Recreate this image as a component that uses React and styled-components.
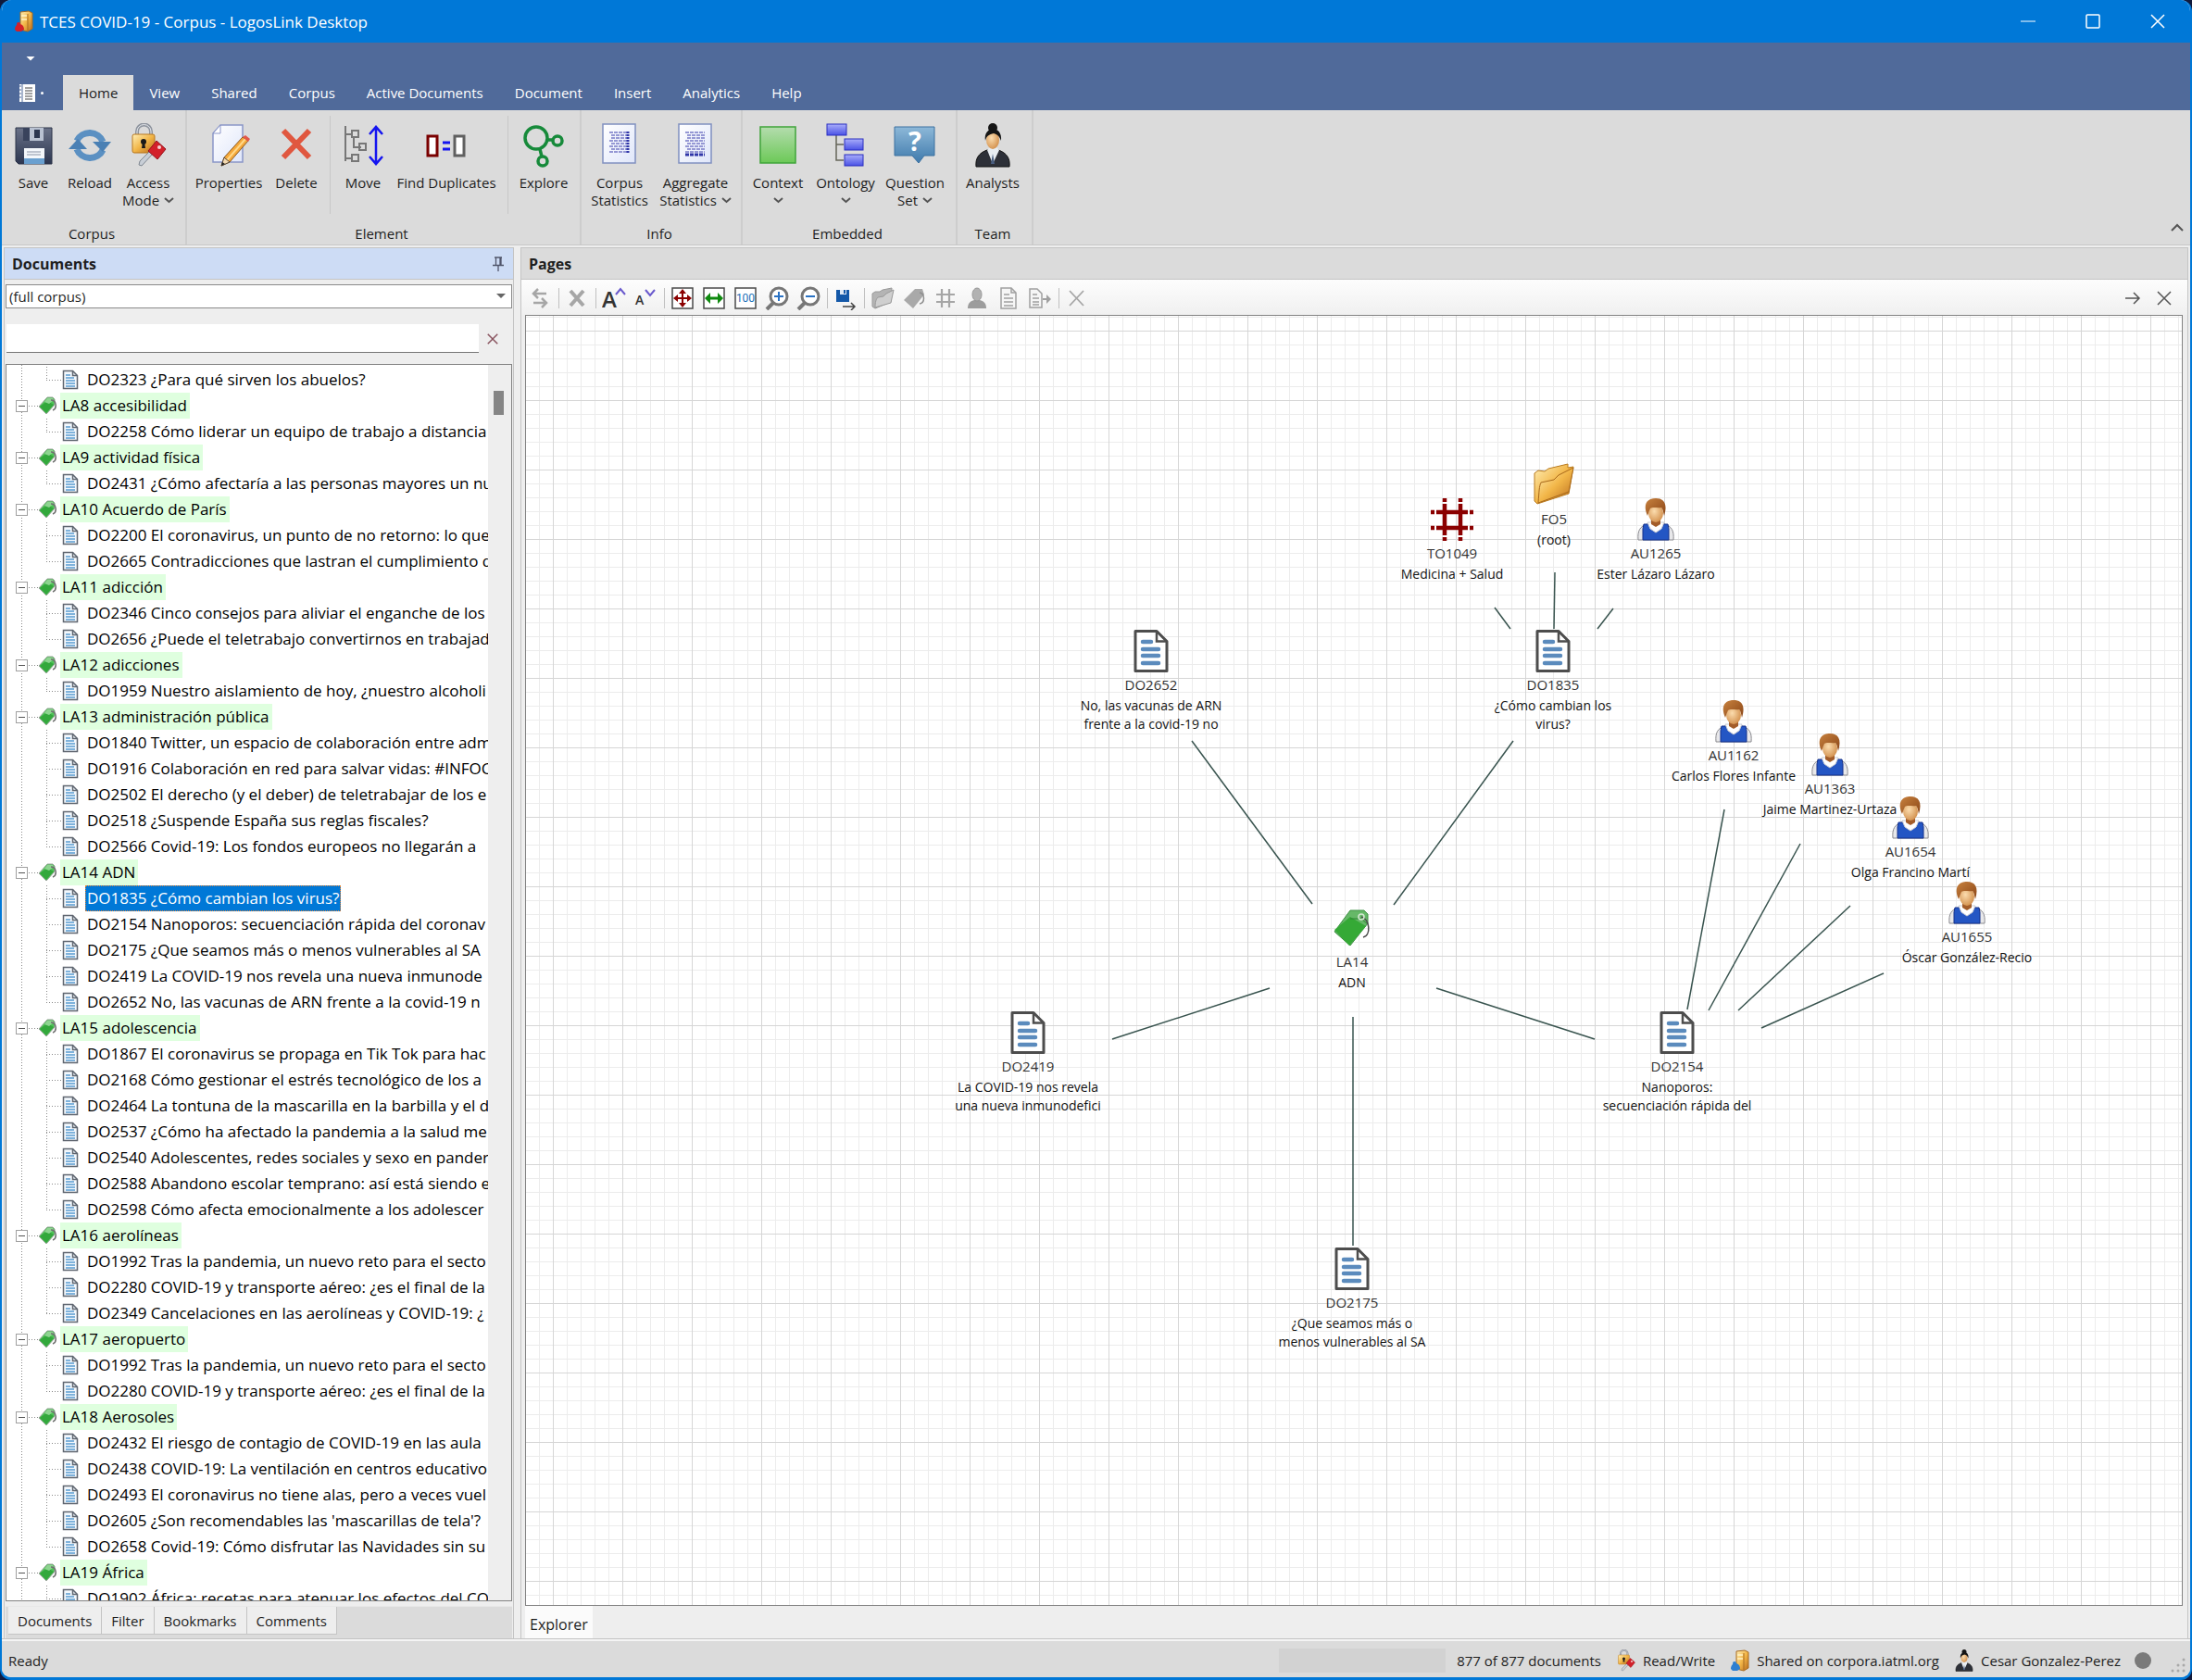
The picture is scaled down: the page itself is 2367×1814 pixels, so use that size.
import React from "react";
import styled, { createGlobalStyle } from "styled-components";

const GlobalStyle = createGlobalStyle`
  * {
    box-sizing: border-box;
  }
  body {
    margin: 0;
    background: #101a3c;
    font-family: "Open Sans", "Noto Sans", sans-serif;
    font-size: 15px;
    color: #1e1e1e;
  }
  button, select, input {
    font: inherit;
    color: inherit;
    margin: 0;
    padding: 0;
    border: 0;
    background: none;
  }
  svg {
    display: block;
    flex: none;
  }
`;

/* ---------- window ---------- */

const Window = styled.div`
  height: 100vh;
  min-height: 700px;
  display: flex;
  flex-direction: column;
  overflow: hidden;
  border: solid #0078d7;
  border-width: 0 2px 3px;
  border-radius: 12px;
  background: #eeeeee;
`;

const TitleBar = styled.header`
  display: flex;
  align-items: center;
  flex: none;
  height: 46px;
  padding-left: 12px;
  gap: 5px;
  background: #0078d7;
  color: #fff;
`;

const Title = styled.h1`
  flex: 1;
  margin: 0;
  font-size: 17px;
  font-weight: 400;
`;

const WindowButtons = styled.div`
  display: flex;
`;

const WindowButton = styled.button`
  width: 70px;
  height: 46px;
  display: flex;
  align-items: center;
  justify-content: center;
`;

/* ---------- ribbon ---------- */

const QuickAccess = styled.div`
  flex: none;
  display: flex;
  align-items: flex-start;
  height: 35px;
  padding: 12px 0 0 24px;
  background: #506a9a;
`;

const RibbonTabs = styled.nav`
  flex: none;
  display: flex;
  height: 38px;
  background: #506a9a;
`;

const FileButton = styled.button`
  width: 66px;
  padding-left: 16px;
  display: flex;
  align-items: center;
  gap: 4px;
`;

const RibbonTab = styled.button`
  padding: 0 17px;
  color: ${(props) => (props.$active ? "#1e1e1e" : "#fff")};
  background: ${(props) => (props.$active ? "#dbdbdb" : "transparent")};
`;

const Ribbon = styled.div`
  flex: none;
  display: flex;
  height: 146px;
  background: #dbdbdb;
  border-bottom: 1px solid #c8c8c8;
`;

const RibbonGroup = styled.section`
  display: flex;
  flex-direction: column;
  padding: 0 6px 0 2px;
  border-right: 2px solid #cdcdcd;
`;

const RibbonItems = styled.div`
  flex: 1;
  display: flex;
  align-items: flex-start;
  padding-top: 14px;
`;

const RibbonLabel = styled.div`
  height: 24px;
  line-height: 24px;
  text-align: center;
`;

const RibbonDivider = styled.span`
  width: 12px;
  height: 106px;
  margin-top: -8px;
  background: linear-gradient(#c8c8c8, #c8c8c8) center / 1px 100% no-repeat;
`;

const RibbonButton = styled.button`
  display: flex;
  flex-direction: column;
  align-items: center;
  width: ${(props) => props.$width}px;
  line-height: 19px;
  white-space: nowrap;
`;

const ButtonText = styled.span`
  display: flex;
  align-items: center;
  justify-content: center;
  gap: 5px;
  min-height: 19px;
`;

const IconBox = styled.span`
  height: 55px;
`;

const Collapse = styled.button`
  margin-left: auto;
  align-self: flex-end;
  width: 28px;
  height: 38px;
  display: flex;
  align-items: center;
  justify-content: center;
`;

/* ---------- panels ---------- */

const Workspace = styled.main`
  flex: 1;
  min-height: 0;
  display: flex;
  gap: 7px;
  padding: 2px 2px 0;
  border-bottom: 1px solid #c4c4c4;
`;

const SidePanel = styled.section`
  flex: 0 0 551px;
  min-width: 0;
  display: flex;
  flex-direction: column;
  border: 1px solid #c4c4c4;
  border-width: 1px 1px 0;
`;

const PanelHeader = styled.div`
  flex: none;
  display: flex;
  align-items: center;
  justify-content: space-between;
  height: 34px;
  padding: 0 10px 0 8px;
  background: ${(props) => (props.$active ? "#cddcf5" : "#dbdbdb")};
  border-bottom: 1px solid #c4c4c4;
`;

const PanelTitle = styled.h2`
  margin: 0;
  font-size: 16px;
  font-weight: 700;
`;

const Scope = styled.div`
  flex: none;
  display: flex;
  align-items: center;
  height: 26px;
  margin: 5px 1px 17px 1px;
  padding-right: 6px;
  background: #fff;
  border: 1px solid #8a8a8a;
`;

const ScopeSelect = styled.select`
  flex: 1;
  height: 24px;
  padding-left: 3px;
  appearance: none;
  outline: 0;
`;

const Search = styled.div`
  flex: none;
  display: flex;
  align-items: center;
  height: 31px;
  margin: 0 0 12px 2px;
`;

const SearchInput = styled.input`
  width: 510px;
  height: 31px;
  padding: 0 6px;
  background: #fff;
  border-bottom: 1px solid #767676;
`;

const ClearButton = styled.button`
  width: 30px;
  height: 31px;
  display: flex;
  align-items: center;
  justify-content: center;
`;

const TreeFrame = styled.div`
  flex: 1;
  min-height: 0;
  display: flex;
  margin: 0 1px 5px 1px;
  background: #fff;
  border: 1px solid #828282;
`;

const Tree = styled.ul`
  flex: 1;
  min-width: 0;
  overflow: hidden;
  margin: 0;
  padding: 2px 0 0;
  list-style: none;
  font-size: 17px;
  color: #000;
  background: repeating-linear-gradient(#8a8a8a 0 1px, #fff 1px 3px) 16px 0 / 1px 100% no-repeat;
`;

const Branch = styled.div`
  display: flex;
  align-items: center;
  height: 28px;
  padding-left: 10px;
  background: repeating-linear-gradient(90deg, #8a8a8a 0 1px, #fff 1px 3px) 24px 14px / 10px 1px no-repeat;
`;

const Toggle = styled.button`
  width: 13px;
  height: 13px;
  margin-right: 11px;
  border: 1px solid #a0a0a0;
  background: linear-gradient(#555, #555) center / 7px 1px no-repeat #fff;
`;

const BranchLabel = styled.span`
  height: 28px;
  line-height: 28px;
  margin-left: 4px;
  padding: 0 3px 0 2px;
  white-space: nowrap;
  background: #dfffdf;
`;

const Leaves = styled.ul`
  margin: 0;
  padding: 0;
  list-style: none;
  background: repeating-linear-gradient(#8a8a8a 0 1px, #fff 1px 3px) 43px 0 / 1px calc(100% - 14px) no-repeat;
`;

const Leaf = styled.li`
  display: flex;
  align-items: center;
  height: 28px;
  padding-left: 60px;
  background: repeating-linear-gradient(90deg, #8a8a8a 0 1px, #fff 1px 3px) 43px 14px / 16px 1px no-repeat;
`;

const LeafLabel = styled.span`
  height: 28px;
  line-height: 26px;
  margin-left: 7px;
  padding: 0 1px;
  white-space: nowrap;
  border: 1px dotted ${(props) => (props.$selected ? "#e08030" : "transparent")};
  background: ${(props) => (props.$selected ? "#0078d7" : "transparent")};
  color: ${(props) => (props.$selected ? "#fff" : "#000")};
`;

const ScrollTrack = styled.div`
  flex: none;
  width: 25px;
  padding: 28px 0 0 6px;
  background: #eeeeee;
`;

const ScrollThumb = styled.div`
  width: 11px;
  height: 26px;
  background: #858585;
`;

const SideTabs = styled.div`
  flex: none;
  display: flex;
  height: 35px;
  padding: 0 0 4px 3px;
  margin: 0 1px;
  background: #dbdbdb;
  border-top: 1px solid #e8e8e8;
`;

const SideTab = styled.button`
  padding: 0 10px;
  background: #eeeeee;
  border: solid #c4c4c4;
  border-width: 0 1px 1px 0;
`;

const PagesPanel = styled.section`
  flex: 1;
  min-width: 0;
  display: flex;
  flex-direction: column;
  border: 1px solid #c4c4c4;
  border-width: 1px 1px 0;
`;

const Toolbar = styled.div`
  flex: none;
  display: flex;
  height: 38px;
  padding: 1px 8px 0 3px;
  background: linear-gradient(#fdfdfd, #f0f0f0);
`;

const ToolButton = styled.button`
  width: 34px;
  display: flex;
  align-items: center;
  justify-content: center;
`;

const ToolDivider = styled.span`
  width: 6px;
  background: linear-gradient(#c0c0c0, #c0c0c0) center / 1px 22px no-repeat;
`;

const Spacer = styled.span`
  flex: 1;
`;

const Canvas = styled.div`
  flex: 1;
  min-height: 0;
  position: relative;
  overflow: hidden;
  margin: 0 5px 0 4px;
  border: 1px solid #828282;
  background:
    linear-gradient(90deg, #d6d6d6 1px, transparent 1px) 29px 0 / 75px 75px,
    linear-gradient(#d6d6d6 1px, transparent 1px) 0 16px / 75px 75px,
    linear-gradient(90deg, #ececec 1px, transparent 1px) 14px 0 / 15px 15px,
    linear-gradient(#ececec 1px, transparent 1px) 0 1px / 15px 15px,
    #fff;
`;

const Edges = styled.svg`
  position: absolute;
  inset: 0;
  width: 100%;
  height: 100%;
  stroke: #39544f;
  stroke-width: 1.5;
`;

const Node = styled.div`
  position: absolute;
  left: ${(props) => props.$x - 90}px;
  top: ${(props) => props.$y - 23}px;
  width: 180px;
  display: flex;
  flex-direction: column;
  align-items: center;
  text-align: center;
`;

const NodeCode = styled.span`
  line-height: 24px;
  font-size: 15px;
  color: #333;
`;

const NodeTitle = styled.span`
  margin-top: 1px;
  line-height: 20px;
  font-size: 14px;
  color: #111;
  white-space: pre;
`;

const PageTabs = styled.div`
  flex: none;
  display: flex;
  height: 35px;
  padding-left: 4px;
`;

const PageTab = styled.button`
  padding: 4px 5px 0;
  font-size: 16px;
  background: #fbfbfb;
`;

/* ---------- status bar ---------- */

const StatusBar = styled.footer`
  flex: none;
  display: flex;
  align-items: center;
  height: 41px;
  padding: 2px 4px 0 7px;
  background: #dbdbdb;
  border-top: 2px solid #f4f4f4;
`;

const StatusItem = styled.span`
  display: flex;
  align-items: center;
  gap: 6px;
  margin-right: 15px;
`;

const Progress = styled.span`
  width: 180px;
  height: 26px;
  margin: 0 12px 0 auto;
  background: #d2d2d2;
`;

/* ---------- icons ---------- */

const Icon = ({ size = 48, box = 48, children }) => (
  <svg width={size} height={size} viewBox={`0 0 ${box} ${box}`} fill="none" aria-hidden="true">
    {children}
  </svg>
);

const GradientSvg = styled.svg`
  position: absolute;
`;

const Gradients = () => (
  <GradientSvg width="0" height="0" aria-hidden="true">
    <defs>
      <linearGradient id="gSteel" x1="0" y1="0" x2="0" y2="1">
        <stop offset="0" stopColor="#6a7288" />
        <stop offset="1" stopColor="#2c3650" />
      </linearGradient>
      <linearGradient id="gGold" x1="0" y1="0" x2="1" y2="1">
        <stop offset="0" stopColor="#fff0b8" />
        <stop offset="0.5" stopColor="#f2b648" />
        <stop offset="1" stopColor="#b86a1c" />
      </linearGradient>
      <linearGradient id="gPage" x1="0" y1="0" x2="1" y2="1">
        <stop offset="0" stopColor="#ffffff" />
        <stop offset="1" stopColor="#dfe6fa" />
      </linearGradient>
      <linearGradient id="gGreen" x1="0" y1="0" x2="0" y2="1">
        <stop offset="0" stopColor="#b4dcae" />
        <stop offset="1" stopColor="#6cc957" />
      </linearGradient>
      <linearGradient id="gViolet" x1="0" y1="0" x2="0" y2="1">
        <stop offset="0" stopColor="#a9adfa" />
        <stop offset="1" stopColor="#4a52e6" />
      </linearGradient>
      <linearGradient id="gBubble" x1="0" y1="0" x2="0" y2="1">
        <stop offset="0" stopColor="#8db8d8" />
        <stop offset="1" stopColor="#3f7aac" />
      </linearGradient>
      <radialGradient id="gSkin" cx="0.4" cy="0.4" r="0.7">
        <stop offset="0" stopColor="#fbdcae" />
        <stop offset="1" stopColor="#cf8a45" />
      </radialGradient>
      <linearGradient id="gHair" x1="0" y1="0" x2="1" y2="1">
        <stop offset="0" stopColor="#c8823f" />
        <stop offset="1" stopColor="#8a4516" />
      </linearGradient>
    </defs>
  </GradientSvg>
);

const SaveIcon = () => (
  <Icon>
    <path d="M5 5h39v39H8l-3-3z" fill="url(#gSteel)" stroke="#2c3449" />
    <rect x="13" y="5" width="22" height="14" fill="#b9c2d2" />
    <rect x="13" y="5" width="7" height="14" fill="#39435c" />
    <rect x="25" y="7" width="6" height="9" fill="#2b3650" />
    <rect x="14" y="27" width="22" height="17" fill="#f4f7fb" />
    <path d="M17 31h15M17 34h15" stroke="#8a93a5" />
    <rect x="14" y="38" width="22" height="6" fill="#6aa0d0" />
  </Icon>
);

const ReloadIcon = () => (
  <Icon>
    <path d="M10 19a15 14 0 0 1 28 1" stroke="#5b90c2" strokeWidth="7" />
    <path d="M38 29a15 14 0 0 1-28-1" stroke="#5b90c2" strokeWidth="7" />
    <path d="M27 20h20l-9 11z" fill="#4a80b4" />
    <path d="M1 28h20l-10-11z" fill="#4a80b4" />
  </Icon>
);

const AccessIcon = ({ size }) => (
  <Icon size={size}>
    <path d="M12 14V9a7 7 0 0 1 15 0v6" stroke="#8e949e" strokeWidth="4" />
    <path d="M12 13V9a7 7 0 0 1 15 0v5" stroke="#e4e7eb" strokeWidth="1" />
    <rect x="7" y="12" width="24" height="20" rx="2" fill="url(#gGold)" stroke="#b9781f" />
    <circle cx="19" cy="20" r="3" fill="#1a1a1a" />
    <path d="M18 20h2l1 7h-4z" fill="#1a1a1a" />
    <path d="M29 33L17 46l-3-1 1-4 11-11z" fill="#c8ced6" stroke="#7f8790" />
    <path d="M33 19l10 9-9 11-10-9z" fill="#d3202a" stroke="#94131b" strokeLinejoin="round" />
    <circle cx="36" cy="26" r="2" fill="#fff" opacity="0.8" />
  </Icon>
);

const PropertiesIcon = () => (
  <Icon>
    <path d="M15 2h24v40H7V11z" fill="url(#gPage)" stroke="#8a96c8" strokeWidth="1.5" />
    <path d="M15 2v9H7z" fill="#fff" stroke="#8a96c8" />
    <path d="M16 46l3-9L39 15l6 4-20 23z" fill="#f5a83a" stroke="#8a5a20" />
    <path d="M22 40l20-23" stroke="#ffd98a" strokeWidth="2" />
    <path d="M39 15l3-2 5 4-2 3z" fill="#e2574a" />
    <path d="M16 46l3-9 6 5z" fill="#f3d9b0" stroke="#5a4a3a" />
    <path d="M16 46l1-4 3 2z" fill="#222" />
  </Icon>
);

const DeleteIcon = () => (
  <Icon>
    <path d="M10 8l28 29M38 8L10 37" stroke="#e0573f" strokeWidth="6" />
  </Icon>
);

const MoveIcon = () => (
  <Icon>
    <path d="M5 3v38M5 12h7M5 38h7M14 16v10h8" stroke="#777" strokeWidth="2" />
    <g stroke="#777" strokeWidth="2">
      <rect x="12" y="8" width="7" height="7" />
      <rect x="20" y="22" width="7" height="7" />
      <rect x="12" y="34" width="7" height="7" />
    </g>
    <path d="M38 5v38M31 12l7-8 7 8M31 36l7 8 7-8" stroke="#1414f0" strokeWidth="2.5" />
  </Icon>
);

const DuplicatesIcon = () => (
  <Icon>
    <rect x="4" y="14" width="10" height="21" fill="#fff" stroke="#7a0000" strokeWidth="3" />
    <rect x="33" y="14" width="10" height="21" fill="#fff" stroke="#606060" strokeWidth="3" />
    <path d="M20 21h8M20 28h8" stroke="#1414f0" strokeWidth="3" />
  </Icon>
);

const ExploreIcon = () => (
  <Icon>
    <g stroke="#168a3a" strokeWidth="3.5">
      <circle cx="16" cy="16" r="12" />
      <circle cx="39" cy="19" r="5" />
      <circle cx="23" cy="41" r="5" />
      <path d="M28 18h6M20 28l2 8" />
    </g>
  </Icon>
);

const StatsIcon = ({ aggregate }) => (
  <Icon>
    <rect x="6" y="1" width="35" height="42" fill="url(#gPage)" stroke="#8090c0" strokeWidth="1.5" />
    <g stroke="#9598d4" strokeWidth="2" strokeDasharray="4 1">
      <path d="M13 10h21M15 13h19M15 16h19M13 19h21M15 22h19M13 25h21M15 28h19M13 31h21" />
    </g>
    {aggregate ? (
      <path d="M13 34h21" stroke="#3036a8" strokeWidth="3" strokeDasharray="4 1" />
    ) : (
      <path d="M33 9v23" stroke="#3036a8" strokeWidth="3" strokeDasharray="2 1" />
    )}
  </Icon>
);

const ContextIcon = () => (
  <Icon>
    <rect x="5" y="4" width="38" height="39" fill="url(#gGreen)" stroke="#3fa43a" strokeWidth="1.5" />
  </Icon>
);

const OntologyIcon = () => (
  <Icon>
    <path d="M14 13v27h8M14 23h8" stroke="#66665a" strokeWidth="1.5" />
    <g fill="url(#gViolet)" stroke="#2a2fc0">
      <rect x="4" y="1" width="21" height="12" />
      <rect x="23" y="17" width="20" height="12" />
      <rect x="23" y="34" width="20" height="12" />
    </g>
  </Icon>
);

const QuestionIcon = () => (
  <Icon>
    <path d="M2 4h43v31H34l-6 8-7-8H2z" fill="url(#gBubble)" stroke="#3a70a0" />
    <text x="24" y="30" textAnchor="middle" fontFamily="Open Sans" fontSize="29" fontWeight="700" fill="#fff">
      ?
    </text>
  </Icon>
);

const AnalystIcon = ({ size }) => (
  <Icon size={size}>
    <circle cx="24" cy="5" r="5" fill="#151515" />
    <path d="M6 47c-1-9 3-15 12-18h12c9 3 13 9 12 18z" fill="#2d3038" stroke="#111" />
    <path d="M18 29l6 15 7-15-3-3h-7z" fill="#e8edf2" />
    <path d="M24 33l-2 11h4z" fill="#4a5f82" />
    <ellipse cx="24" cy="18" rx="7" ry="10" fill="url(#gSkin)" />
    <path d="M16 19c-3-16 19-18 17 0-2-5-4-7-8-8-5 1-8 3-9 8z" fill="#151515" />
  </Icon>
);

const DocIcon = () => (
  <svg width="18" height="22" viewBox="0 0 18 22" fill="none" aria-hidden="true">
    <path d="M1.5 1.5h10l5 5v14h-15z" fill="#f3f8fd" stroke="#5f6670" strokeWidth="1.5" />
    <path d="M11.5 1.5v5h5" stroke="#5f6670" strokeWidth="1.5" />
    <path d="M4 6h5M4 9h9M4 12h10M4 15h10M4 18h10" stroke="#5a9ad0" strokeWidth="1.4" />
  </svg>
);

const TagIcon = () => (
  <svg width="20" height="20" viewBox="0 0 20 20" fill="none" aria-hidden="true">
    <path d="M10 1h6l2 2v6L9 19 1 11z" fill="#4fc258" stroke="#9aa59a" strokeWidth="1" />
    <path d="M2 11l8-6 7 4-8 9z" fill="#33a83c" />
    <path d="M10 2h6l1 2-5 4-5-2z" fill="#8ed490" />
    <path d="M14 4c6 0 7 9 2 11" stroke="#707070" strokeWidth="1.500" />
  </svg>
);

const DocNode = () => (
  <Icon>
    <path d="M7 2.500h23l11 11v32H7z" fill="#fff" stroke="#4d4d4d" strokeWidth="3" strokeLinejoin="round" />
    <path d="M30 2.500v11h11" stroke="#4d4d4d" strokeWidth="2.500" />
    <path d="M15 14h9M15 22h17M15 29h17M15 37h17" stroke="#5b8bbd" strokeWidth="4.500" strokeLinecap="round" />
  </Icon>
);

const TopicNode = () => (
  <Icon>
    <g stroke="#8b0000" strokeWidth="4.5">
      <path d="M16 7v34M33 7v34M7 16h34M7 33h34" />
      <path d="M16 1v4M33 1v4M16 43v4M33 43v4M1 16h4M1 33h4M43 16h4M43 33h4" />
    </g>
  </Icon>
);

const FolderNode = () => (
  <Icon>
    <path d="M3 11l4-3 7 1 4-3 21-5v4l6-1-5 29L6 44l-3-3z" fill="url(#gGold)" stroke="#b97a1e" strokeLinejoin="round" />
    <path d="M7 43c1-12 1-18 3-22l14-3 5-5 16-8-5 26z" fill="url(#gGold)" stroke="#a8681a" strokeLinejoin="round" />
  </Icon>
);

const PersonNode = () => (
  <Icon>
    <path d="M5 46c-1-10 2-15 10-17h18c8 2 11 7 10 17z" fill="#e8e8ea" stroke="#8b8b90" />
    <path d="M10 46V34l1-5h6c3 7 11 7 14 0h6l1 5v12z" fill="#2456c4" stroke="#15308a" />
    <path d="M15 27h18l-3 7-6 4-6-4z" fill="#fff" stroke="#c9ccd4" />
    <path d="M19 22h10v7l-5 3-5-3z" fill="#a35d2a" />
    <ellipse cx="24" cy="17" rx="8" ry="10" fill="url(#gSkin)" />
    <path d="M15 20C9 6 16 1 24 1c9 0 13 6 9 19-1-4-1-7-3-9-4 1-9-1-12 1-1 2-2 5-3 8z" fill="url(#gHair)" />
  </Icon>
);

const TagNode = () => (
  <Icon>
    <path d="M22 5h15l4 4v10L22 43 5 28z" fill="#66b868" stroke="#3d8f42" />
    <path d="M5 26l17-14 17 10-18 21z" fill="#35a936" />
    <path d="M22 14l12 0 7 6" stroke="#2d8233" />
    <path d="M34 12c9 2 11 20 2 22" stroke="#4a4a4a" strokeWidth="1.5" />
    <circle cx="34" cy="12" r="3" stroke="#d6e8d4" strokeWidth="1.5" />
  </Icon>
);

const ServerIcon = ({ accent = "#2e7fd0" }) => (
  <Icon size={24} box={24}>
    <path d="M8 2l9-1 4 2v17l-5 3-8-2z" fill="url(#gGold)" stroke="#a86a1e" />
    <path d="M16 4v18" stroke="#a86a1e" />
    <path d="M9 6l6 0M9 10l6 0" stroke="#fff3c8" strokeWidth="1.5" />
    <path d="M2 21c0-8 10-8 10 0l-3 2H4z" fill={accent} />
    <circle cx="6" cy="15" r="2" fill={accent} />
  </Icon>
);

const Chevron = () => (
  <svg width="11" height="7" viewBox="0 0 11 7" fill="none" aria-hidden="true">
    <path d="M1 1l4.500 4L10 1" stroke="#555" strokeWidth="2" />
  </svg>
);

const Cross = ({ size = 16, color = "#555", weight = 1.5 }) => (
  <Icon size={size} box={16}>
    <path d="M1 1l14 14M15 1L1 15" stroke={color} strokeWidth={weight} />
  </Icon>
);

const Tool = ({ children }) => (
  <svg width="26" height="26" viewBox="0 0 26 26" fill="none" aria-hidden="true">
    {children}
  </svg>
);

const GREY = "#a6a6a6";

/* ---------- data ---------- */

const ribbonTabs = [
  "Home", "View", "Shared", "Corpus", "Active Documents", "Document", "Insert", "Analytics", "Help",
];

const ribbonGroups = [
  {
    label: "Corpus",
    items: [
      { lines: ["Save"], width: 64, icon: <SaveIcon /> },
      { lines: ["Reload"], width: 58, icon: <ReloadIcon /> },
      { lines: ["Access", "Mode"], menu: true, width: 68, icon: <AccessIcon /> },
    ],
  },
  {
    label: "Element",
    items: [
      { lines: ["Properties"], width: 86, icon: <PropertiesIcon /> },
      { lines: ["Delete"], width: 60, icon: <DeleteIcon /> },
      null,
      { lines: ["Move"], width: 60, icon: <MoveIcon /> },
      { lines: ["Find Duplicates"], width: 120, icon: <DuplicatesIcon /> },
      null,
      { lines: ["Explore"], width: 66, icon: <ExploreIcon /> },
    ],
  },
  {
    label: "Info",
    items: [
      { lines: ["Corpus", "Statistics"], width: 78, icon: <StatsIcon /> },
      { lines: ["Aggregate", "Statistics"], menu: true, width: 86, icon: <StatsIcon aggregate /> },
    ],
  },
  {
    label: "Embedded",
    items: [
      { lines: ["Context", ""], menu: true, width: 72, icon: <ContextIcon /> },
      { lines: ["Ontology", ""], menu: true, width: 74, icon: <OntologyIcon /> },
      { lines: ["Question", "Set"], menu: true, width: 76, icon: <QuestionIcon /> },
    ],
  },
  {
    label: "Team",
    items: [{ lines: ["Analysts"], width: 72, icon: <AnalystIcon /> }],
  },
];

const tree = [
  { docs: ["DO2323 ¿Para qué sirven los abuelos?"] },
  { label: "LA8 accesibilidad", docs: ["DO2258 Cómo liderar un equipo de trabajo a distancia"] },
  { label: "LA9 actividad física", docs: ["DO2431 ¿Cómo afectaría a las personas mayores un nu"] },
  {
    label: "LA10 Acuerdo de París",
    docs: [
      "DO2200 El coronavirus, un punto de no retorno: lo que",
      "DO2665 Contradicciones que lastran el cumplimiento d",
    ],
  },
  {
    label: "LA11 adicción",
    docs: [
      "DO2346 Cinco consejos para aliviar el enganche de los",
      "DO2656 ¿Puede el teletrabajo convertirnos en trabajad",
    ],
  },
  { label: "LA12 adicciones", docs: ["DO1959 Nuestro aislamiento de hoy, ¿nuestro alcoholi"] },
  {
    label: "LA13 administración pública",
    docs: [
      "DO1840 Twitter, un espacio de colaboración entre adm",
      "DO1916 Colaboración en red para salvar vidas: #INFOC",
      "DO2502 El derecho (y el deber) de teletrabajar de los e",
      "DO2518 ¿Suspende España sus reglas fiscales?",
      "DO2566 Covid-19: Los fondos europeos no llegarán a",
    ],
  },
  {
    label: "LA14 ADN",
    docs: [
      "DO1835 ¿Cómo cambian los virus?",
      "DO2154 Nanoporos: secuenciación rápida del coronav",
      "DO2175 ¿Que seamos más o menos vulnerables al SA",
      "DO2419 La COVID-19 nos revela una nueva inmunode",
      "DO2652 No, las vacunas de ARN frente a la covid-19 n",
    ],
  },
  {
    label: "LA15 adolescencia",
    docs: [
      "DO1867 El coronavirus se propaga en Tik Tok para hac",
      "DO2168 Cómo gestionar el estrés tecnológico de los a",
      "DO2464 La tontuna de la mascarilla en la barbilla y el d",
      "DO2537 ¿Cómo ha afectado la pandemia a la salud me",
      "DO2540 Adolescentes, redes sociales y sexo en pander",
      "DO2588 Abandono escolar temprano: así está siendo e",
      "DO2598 Cómo afecta emocionalmente a los adolescer",
    ],
  },
  {
    label: "LA16 aerolíneas",
    docs: [
      "DO1992 Tras la pandemia, un nuevo reto para el secto",
      "DO2280 COVID-19 y transporte aéreo: ¿es el final de la",
      "DO2349 Cancelaciones en las aerolíneas y COVID-19: ¿",
    ],
  },
  {
    label: "LA17 aeropuerto",
    docs: [
      "DO1992 Tras la pandemia, un nuevo reto para el secto",
      "DO2280 COVID-19 y transporte aéreo: ¿es el final de la",
    ],
  },
  {
    label: "LA18 Aerosoles",
    docs: [
      "DO2432 El riesgo de contagio de COVID-19 en las aula",
      "DO2438 COVID-19: La ventilación en centros educativo",
      "DO2493 El coronavirus no tiene alas, pero a veces vuel",
      "DO2605 ¿Son recomendables las 'mascarillas de tela'?",
      "DO2658 Covid-19: Cómo disfrutar las Navidades sin su",
    ],
  },
  { label: "LA19 África", docs: ["DO1902 África: recetas para atenuar los efectos del CO"] },
];

const selectedDoc = "DO1835 ¿Cómo cambian los virus?";

const nodes = [
  { code: "TO1049", title: "Medicina + Salud", x: 1000, y: 219, icon: <TopicNode /> },
  { code: "FO5", title: "(root)", x: 1110, y: 182, icon: <FolderNode /> },
  { code: "AU1265", title: "Ester Lázaro Lázaro", x: 1220, y: 219, icon: <PersonNode /> },
  { code: "DO2652", title: "No, las vacunas de ARN\nfrente a la covid-19 no", x: 675, y: 361, icon: <DocNode /> },
  { code: "DO1835", title: "¿Cómo cambian los\nvirus?", x: 1109, y: 361, icon: <DocNode /> },
  { code: "AU1162", title: "Carlos Flores Infante", x: 1304, y: 437, icon: <PersonNode /> },
  { code: "AU1363", title: "Jaime Martinez-Urtaza", x: 1408, y: 473, icon: <PersonNode /> },
  { code: "AU1654", title: "Olga Francino Martí", x: 1495, y: 541, icon: <PersonNode /> },
  { code: "AU1655", title: "Óscar González-Recio", x: 1556, y: 633, icon: <PersonNode /> },
  { code: "LA14", title: "ADN", x: 892, y: 660, icon: <TagNode /> },
  { code: "DO2419", title: "La COVID-19 nos revela\nuna nueva inmunodefici", x: 542, y: 773, icon: <DocNode /> },
  { code: "DO2154", title: "Nanoporos:\nsecuenciación rápida del", x: 1243, y: 773, icon: <DocNode /> },
  { code: "DO2175", title: "¿Que seamos más o\nmenos vulnerables al SA", x: 892, y: 1028, icon: <DocNode /> },
];

const edges = [
  [1046, 315, 1063, 338],
  [1111, 277, 1110, 338],
  [1174, 316, 1157, 338],
  [719, 459, 849, 635],
  [1066, 459, 937, 636],
  [1294, 533, 1254, 749],
  [1376, 570, 1277, 750],
  [1430, 637, 1309, 750],
  [1466, 710, 1334, 769],
  [803, 726, 633, 781],
  [983, 726, 1154, 781],
  [893, 757, 893, 1004],
];

const tools = [
  {
    name: "Swap",
    icon: (
      <path d="M20 8H6M11 3L6 8l5 5M6 18h14M15 13l5 5-5 5" stroke={GREY} strokeWidth="2.500" />
    ),
  },
  null,
  { name: "Remove", icon: <path d="M6 5l14 16M20 5L6 21" stroke={GREY} strokeWidth="4" /> },
  null,
  {
    name: "Larger text",
    icon: (
      <>
        <text x="0" y="23" fontFamily="Open Sans" fontSize="24" fontWeight="600" fill="#333">A</text>
        <path d="M15 9l5-6 5 6" stroke="#6a5acd" strokeWidth="2" />
      </>
    ),
  },
  {
    name: "Smaller text",
    icon: (
      <>
        <text x="2" y="20" fontFamily="Open Sans" fontSize="14" fontWeight="600" fill="#333">A</text>
        <path d="M13 4l5 6 5-6" stroke="#6a5acd" strokeWidth="2" />
      </>
    ),
  },
  null,
  {
    name: "Fit page",
    icon: (
      <>
        <rect x="2" y="2" width="22" height="22" fill="#fff" stroke="#4a4a4a" strokeWidth="1.5" />
        <path d="M13 6v14M6 13h14" stroke="#8b0000" strokeWidth="2" />
        <path d="M13 3l4 5H9zM13 23l4-5H9zM3 13l5-4v8zM23 13l-5-4v8z" fill="#8b0000" />
      </>
    ),
  },
  {
    name: "Fit width",
    icon: (
      <>
        <rect x="2" y="2" width="22" height="22" fill="#fff" stroke="#4a4a4a" strokeWidth="1.5" />
        <path d="M7 13h12" stroke="#0f8a0f" strokeWidth="3" />
        <path d="M3 13l6-6v12zM23 13l-6-6v12z" fill="#0f8a0f" />
      </>
    ),
  },
  {
    name: "Actual size",
    icon: (
      <>
        <rect x="2" y="2" width="22" height="22" fill="#fff" stroke="#4a4a4a" strokeWidth="1.5" />
        <text x="13" y="17" textAnchor="middle" fontFamily="Roboto" fontSize="12" fill="#1a6fb8">100</text>
      </>
    ),
  },
  {
    name: "Zoom in",
    icon: (
      <>
        <circle cx="15" cy="11" r="9" fill="#fff" stroke="#777" strokeWidth="3" />
        <path d="M9 18l-7 7" stroke="#777" strokeWidth="4" />
        <path d="M10 11h10M15 6v10" stroke="#2a72c4" strokeWidth="2" />
      </>
    ),
  },
  {
    name: "Zoom out",
    icon: (
      <>
        <circle cx="15" cy="11" r="9" fill="#fff" stroke="#777" strokeWidth="3" />
        <path d="M9 18l-7 7" stroke="#777" strokeWidth="4" />
        <path d="M10 11h10" stroke="#2a72c4" strokeWidth="2" />
      </>
    ),
  },
  null,
  {
    name: "Export",
    icon: (
      <>
        <path d="M3 4h14v13H3z" fill="#1458a8" />
        <path d="M7 4h7v5H7z" fill="#dfe8f4" />
        <path d="M11 4h2v4h-2z" fill="#1458a8" />
        <path d="M10 22h12M19 18l4 4-4 4" stroke="#444" strokeWidth="1.5" />
      </>
    ),
  },
  null,
  {
    name: "Folders",
    icon: (
      <>
        <path d="M2 8l3-2 5 0 3-2 10-2-1 15L5 24l-3-2z" fill="#b4b4b4" stroke="#999" />
        <path d="M5 23c0-6 1-9 3-11l6-1 3-3 8-4-3 14z" fill="#cfcfcf" stroke="#999" />
      </>
    ),
  },
  {
    name: "Labels",
    icon: (
      <>
        <path d="M14 3h8l2 6-12 15L2 15z" fill="#a9a9a9" />
        <path d="M19 7c6 1 6 11 0 12" stroke="#8f8f8f" strokeWidth="1.5" />
      </>
    ),
  },
  {
    name: "Topics",
    icon: <path d="M9 3v20M17 3v20M3 9h20M3 17h20" stroke={GREY} strokeWidth="2.2" />,
  },
  {
    name: "Authors",
    icon: (
      <>
        <path d="M3 24c0-6 3-8 7-9h6c4 1 7 3 7 9z" fill="#9c9c9c" />
        <ellipse cx="13" cy="9" rx="5" ry="7" fill="#b2b2b2" stroke="#969696" />
      </>
    ),
  },
  {
    name: "Documents",
    icon: (
      <>
        <path d="M5 2h11l5 5v17H5z" fill="#f6f6f6" stroke="#a0a0a0" strokeWidth="1.5" />
        <path d="M16 2v5h5M8 9h6M8 13h10M8 17h10M8 21h10" stroke="#a0a0a0" strokeWidth="1.5" />
      </>
    ),
  },
  {
    name: "Add document",
    icon: (
      <>
        <path d="M2 3h8l5 5v15H2z" fill="#f6f6f6" stroke="#a0a0a0" strokeWidth="1.5" />
        <path d="M5 9h5M5 13h7M5 17h7M5 20h7" stroke="#a0a0a0" strokeWidth="1.5" />
        <path d="M16 14h5" stroke="#a0a0a0" strokeWidth="2" />
        <path d="M20 9l5 5-5 5z" fill="#a0a0a0" />
      </>
    ),
  },
  null,
  { name: "Close page", icon: <path d="M5 5l15 16M20 5L5 21" stroke={GREY} strokeWidth="1.8" /> },
];

/* ---------- app ---------- */

const RibbonCommand = ({ item }) => (
  <RibbonButton $width={item.width}>
    <IconBox>{item.icon}</IconBox>
    {item.lines.map((line, i) => (
      <ButtonText key={i}>
        {line}
        {item.menu && i === item.lines.length - 1 && <Chevron />}
      </ButtonText>
    ))}
  </RibbonButton>
);

const TreeBranch = ({ branch }) => (
  <li>
    {branch.label && (
      <Branch>
        <Toggle aria-label={`Collapse ${branch.label}`} />
        <TagIcon />
        <BranchLabel>{branch.label}</BranchLabel>
      </Branch>
    )}
    <Leaves>
      {branch.docs.map((doc) => (
        <Leaf key={doc}>
          <DocIcon />
          <LeafLabel $selected={doc === selectedDoc}>{doc}</LeafLabel>
        </Leaf>
      ))}
    </Leaves>
  </li>
);

const App = () => (
  <>
    <GlobalStyle />
    <Gradients />
    <Window>
      <TitleBar>
        <ServerIcon accent="#d3202a" />
        <Title>TCES COVID-19 - Corpus - LogosLink Desktop</Title>
        <WindowButtons>
          <WindowButton aria-label="Minimize">
            <Icon size={16} box={16}>
              <path d="M0 8h16" stroke="#fff" />
            </Icon>
          </WindowButton>
          <WindowButton aria-label="Maximize">
            <Icon size={16} box={16}>
              <rect x="1" y="1" width="14" height="14" rx="1" stroke="#fff" strokeWidth="1.5" />
            </Icon>
          </WindowButton>
          <WindowButton aria-label="Close">
            <Cross color="#fff" />
          </WindowButton>
        </WindowButtons>
      </TitleBar>

      <QuickAccess>
        <button aria-label="Customize quick access">
          <svg width="14" height="10" viewBox="0 0 14 10" aria-hidden="true">
            <path d="M2.500 3h9L7 7.500z" fill="#fff" />
          </svg>
        </button>
      </QuickAccess>
      <RibbonTabs>
        <FileButton aria-label="File">
          <Icon size={22} box={22}>
            <path d="M3 2h17v19H3z" fill="#fff" />
            <path d="M6 2v19" stroke="#506a9a" />
            <path d="M9 6h8M9 9h8M9 12h8M9 15h8M9 18h8" stroke="#444" />
            <path d="M3 4h2M3 8h2M3 12h2M3 16h2" stroke="#506a9a" />
          </Icon>
          <svg width="3" height="3" aria-hidden="true">
            <circle cx="1.500" cy="1.500" r="1.500" fill="#fff" />
          </svg>
        </FileButton>
        {ribbonTabs.map((tab, i) => (
          <RibbonTab key={tab} $active={i === 0}>
            {tab}
          </RibbonTab>
        ))}
      </RibbonTabs>

      <Ribbon>
        {ribbonGroups.map((group) => (
          <RibbonGroup key={group.label}>
            <RibbonItems>
              {group.items.map((item, i) =>
                item ? <RibbonCommand key={i} item={item} /> : <RibbonDivider key={i} />
              )}
            </RibbonItems>
            <RibbonLabel>{group.label}</RibbonLabel>
          </RibbonGroup>
        ))}
        <Collapse aria-label="Collapse ribbon">
          <svg width="14" height="9" viewBox="0 0 14 9" fill="none" aria-hidden="true">
            <path d="M1 8l6-6 6 6" stroke="#555" strokeWidth="2" />
          </svg>
        </Collapse>
      </Ribbon>

      <Workspace>
        <SidePanel>
          <PanelHeader $active>
            <PanelTitle>Documents</PanelTitle>
            <button aria-label="Pin panel">
              <svg width="12" height="16" viewBox="0 0 12 16" fill="none" aria-hidden="true">
                <path d="M2 1h8M3.500 1v8M8 1v8M9 1v8M0 9.500h12M6 10v6" stroke="#50556a" strokeWidth="1.300" />
              </svg>
            </button>
          </PanelHeader>
          <Scope>
            <ScopeSelect aria-label="Corpus scope">
              <option>(full corpus)</option>
            </ScopeSelect>
            <svg width="10" height="6" viewBox="0 0 10 6" aria-hidden="true">
              <path d="M0 0h10L5 5z" fill="#666" />
            </svg>
          </Scope>
          <Search>
            <SearchInput aria-label="Search documents" />
            <ClearButton aria-label="Clear search">
              <Cross size={12} color="#8a5560" weight={2} />
            </ClearButton>
          </Search>
          <TreeFrame>
            <Tree>
              {tree.map((branch, i) => (
                <TreeBranch key={i} branch={branch} />
              ))}
            </Tree>
            <ScrollTrack>
              <ScrollThumb />
            </ScrollTrack>
          </TreeFrame>
          <SideTabs>
            <SideTab>Documents</SideTab>
            <SideTab>Filter</SideTab>
            <SideTab>Bookmarks</SideTab>
            <SideTab>Comments</SideTab>
          </SideTabs>
        </SidePanel>

        <PagesPanel>
          <PanelHeader>
            <PanelTitle>Pages</PanelTitle>
          </PanelHeader>
          <Toolbar>
            {tools.map((tool, i) =>
              tool ? (
                <ToolButton key={i} aria-label={tool.name}>
                  <Tool>{tool.icon}</Tool>
                </ToolButton>
              ) : (
                <ToolDivider key={i} />
              )
            )}
            <Spacer />
            <ToolButton aria-label="Next page">
              <Icon size={18} box={18}>
                <path d="M1 9h15M10 3l6 6-6 6" stroke="#555" strokeWidth="1.5" />
              </Icon>
            </ToolButton>
            <ToolButton aria-label="Close all">
              <Cross />
            </ToolButton>
          </Toolbar>
          <Canvas>
            <Edges aria-hidden="true">
              {edges.map(([x1, y1, x2, y2], i) => (
                <line key={i} x1={x1} y1={y1} x2={x2} y2={y2} />
              ))}
            </Edges>
            {nodes.map((node) => (
              <Node key={node.code} $x={node.x} $y={node.y}>
                {node.icon}
                <NodeCode>{node.code}</NodeCode>
                <NodeTitle>{node.title}</NodeTitle>
              </Node>
            ))}
          </Canvas>
          <PageTabs>
            <PageTab>Explorer</PageTab>
          </PageTabs>
        </PagesPanel>
      </Workspace>

      <StatusBar>
        <span>Ready</span>
        <Progress />
        <StatusItem>877 of 877 documents</StatusItem>
        <StatusItem>
          <AccessIcon size={24} />
          Read/Write
        </StatusItem>
        <StatusItem>
          <ServerIcon />
          Shared on corpora.iatml.org
        </StatusItem>
        <StatusItem>
          <AnalystIcon size={24} />
          Cesar Gonzalez-Perez
        </StatusItem>
        <svg width="56" height="34" viewBox="0 0 56 34" aria-hidden="true">
          <circle cx="9" cy="17" r="9" fill="#7a7a7a" />
          <g fill="#a8a8a8">
            <circle cx="53" cy="16" r="1.5" />
            <circle cx="47" cy="22" r="1.5" />
            <circle cx="53" cy="22" r="1.5" />
            <circle cx="41" cy="28" r="1.5" />
            <circle cx="47" cy="28" r="1.5" />
            <circle cx="53" cy="28" r="1.5" />
          </g>
        </svg>
      </StatusBar>
    </Window>
  </>
);

export default App;
